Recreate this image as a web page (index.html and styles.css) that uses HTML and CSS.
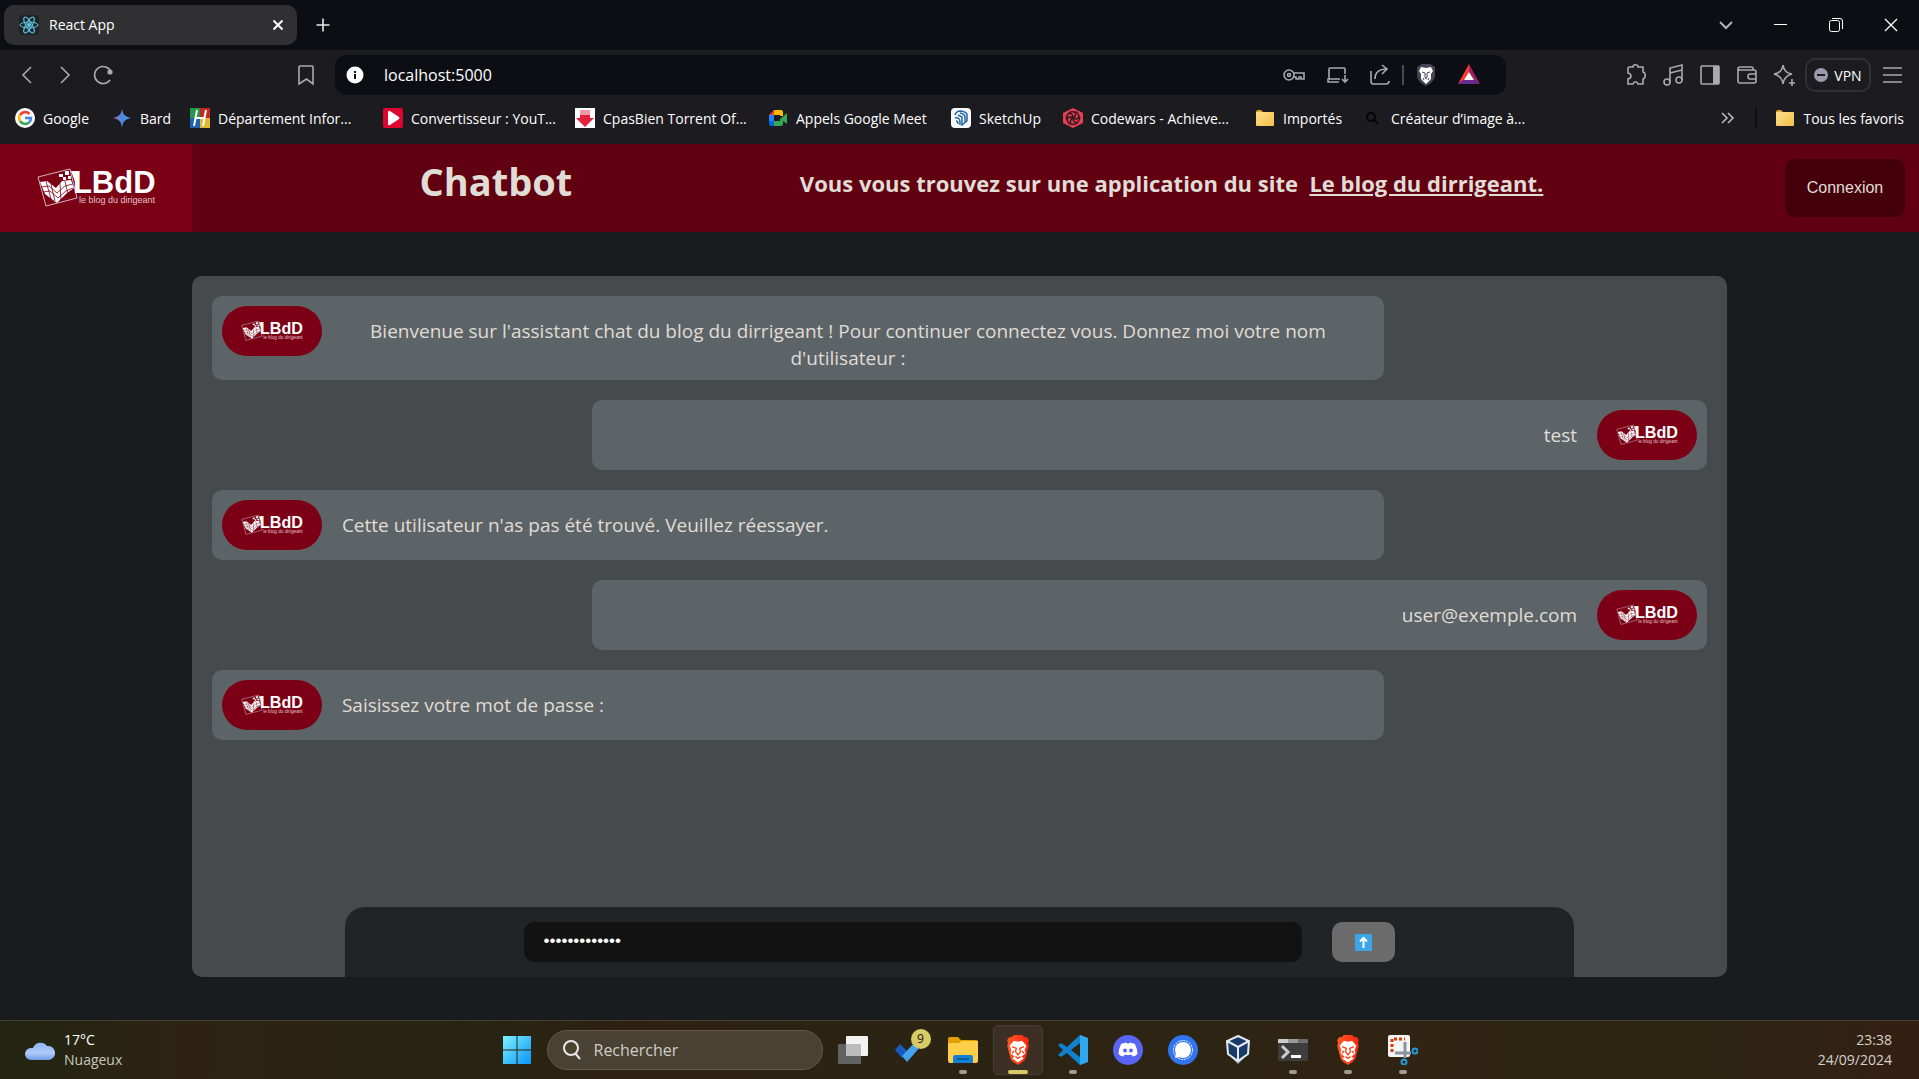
FILE: index.html
```html
<!DOCTYPE html>
<html lang="fr">
<head>
<meta charset="utf-8">
<meta name="viewport" content="width=device-width, initial-scale=1">
<title>React App</title>
<link rel="stylesheet" href="styles.css">
</head>
<body>
<svg class="logo-source" aria-hidden="true">
  <symbol id="logo" viewBox="0 0 192 88">
    <path d="M38 33 70 25 77 54 46 62Z" fill="none" stroke="#fff" stroke-width="1" stroke-opacity=".7"/>
    <path d="M40 38 47 37 56 44 62 37 71 36 74 44 66 50 57 59 45 50Z" fill="#fff"/>
    <path d="M41 43 49 42 57 49 65 42 73 40M43 48 50 47 58 54 66 47 73 44M46 37 51 55M51 40 55 57M60 39 61 56M65 37 68 50" fill="none" stroke="#7b0015" stroke-width=".8"/>
    <path d="M59 30h4v3h-4ZM65 27h4v4h-4ZM68 32h3v3h-3ZM63 33h3v3h-3Z" fill="#fff"/>
    <path d="M71 27h6v16Z" fill="#fff"/>
    <text x="73" y="49" class="logo-name">LBdD</text>
    <text x="79" y="59" class="logo-tag">le blog du dirigeant</text>
  </symbol>
</svg>
<svg class="sprite" aria-hidden="true">
  <defs>
    <linearGradient id="bard-fill" x1="0" x2="1"><stop offset="0" stop-color="#b06cc0"/><stop offset=".5" stop-color="#4a86d8"/><stop offset="1" stop-color="#3fa0e8"/></linearGradient>
    <linearGradient id="folder-fill" x1="0" x2="1" y2="1"><stop offset="0" stop-color="#ffe08a"/><stop offset="1" stop-color="#f3bf4a"/></linearGradient>
    <linearGradient id="brave-fill" x1="0" x2="1"><stop offset="0" stop-color="#ff5a1f"/><stop offset="1" stop-color="#ff2410"/></linearGradient>
    <linearGradient id="win-fill" x1="0" y1="0" x2="1" y2="1"><stop offset="0" stop-color="#7df3ff"/><stop offset="1" stop-color="#0a93f7"/></linearGradient>
    <linearGradient id="cloud-fill" x1="0" y1="0" x2="0" y2="1"><stop offset="0" stop-color="#8fb4f2"/><stop offset=".6" stop-color="#b0cbfa"/><stop offset="1" stop-color="#6f9be8"/></linearGradient>
  </defs>
  <symbol id="i-folder" viewBox="0 0 20 20"><path d="M1 4q0-2 2-2h3l3 3H1Z" fill="#e3a32c"/><rect x="1" y="4" width="18" height="14" rx="1" fill="url(#folder-fill)"/></symbol>
  <symbol id="i-brave" viewBox="0 0 32 36">
    <path d="M11 0h10l3 3 2-1 3 4-1 4 1 3-4 15q-1 3-3 4l-6 4-6-4q-2-1-3-4L3 13l1-3-1-4 3-4 2 1Z" fill="url(#brave-fill)"/>
    <path d="m11 7 5 1 5-1 5 6-2 5 1 4-5 4 3 2-7 5-7-5 3-2-5-4 1-4-2-5Z" fill="#fff"/>
    <path d="m9 14 5 2-1 4 3 4 3-4-1-4 5-2M13 26l3 2 3-2M11 19l-2 3M21 19l2 3" fill="none" stroke="#ff4017" stroke-width="1.600"/>
  </symbol>
</svg>

<header class="browser">
  <div class="tabstrip">
    <div class="tab">
      <svg class="i20" viewBox="0 0 20 20"><rect width="20" height="20" rx="3" fill="#212426"/><g fill="none" stroke="#61c9ea" stroke-width="1"><ellipse cx="10" cy="10" rx="9" ry="3"/><ellipse cx="10" cy="10" rx="9" ry="3" transform="rotate(60 10 10)"/><ellipse cx="10" cy="10" rx="9" ry="3" transform="rotate(120 10 10)"/></g><circle cx="10" cy="10" r="2" fill="#61c9ea"/></svg>
      <span class="tab-title">React App</span>
      <button class="plain" aria-label="Fermer l'onglet"><svg class="i20" viewBox="0 0 20 20"><path d="m5.500 5.500 9 9m0-9-9 9" stroke="#fff" stroke-width="2"/></svg></button>
    </div>
    <button class="plain new-tab" aria-label="Nouvel onglet"><svg class="i20" viewBox="0 0 20 20"><path d="M10 3.500v13M3.500 10h13" stroke="#e8e8ea" stroke-width="1.600"/></svg></button>
    <div class="window-controls">
      <button class="plain" aria-label="Onglets"><svg class="i20" viewBox="0 0 20 20"><path d="m4 7 6 6 6-6" fill="none" stroke="#b4b4b8" stroke-width="2"/></svg></button>
      <button class="plain" aria-label="Réduire"><svg class="i20" viewBox="0 0 20 20"><path d="M3 9.500h13" stroke="#fff"/></svg></button>
      <button class="plain" aria-label="Restaurer"><svg class="i20" viewBox="0 0 20 20"><g fill="none" stroke="#fff"><rect x="3.500" y="5.500" width="10" height="11" rx="2"/><path d="M6 3.500h8q2.500 0 2.500 2.500v8"/></g></svg></button>
      <button class="plain" aria-label="Fermer"><svg class="i20" viewBox="0 0 20 20"><path d="m4 4 12 12m0-12L4 16" stroke="#fff" stroke-width="1.300"/></svg></button>
    </div>
  </div>

  <div class="toolbar">
    <div class="nav-buttons">
      <button class="plain" aria-label="Précédent"><svg class="i24" viewBox="0 0 24 24"><path d="m16 4-8 8 8 8" class="line"/></svg></button>
      <button class="plain" aria-label="Suivant"><svg class="i24" viewBox="0 0 24 24"><path d="m8 4 8 8-8 8" class="line"/></svg></button>
      <button class="plain" aria-label="Actualiser"><svg class="i24" viewBox="0 0 24 24"><path d="M19 17a8.500 8.500 0 1 1 1-8" class="line"/><circle cx="19" cy="9" r="2.600" fill="#a9a9af"/></svg></button>
    </div>
    <button class="plain bookmark" aria-label="Ajouter aux favoris"><svg class="i24" viewBox="0 0 24 24"><path d="M6 3h12q1 0 1 1v17l-6.500-5L5 21V4q0-1 1-1Z" class="line"/></svg></button>
    <div class="address">
      <svg class="i20" viewBox="0 0 20 20"><circle cx="10" cy="10" r="8.500" fill="#fff"/><path d="M9 9h2v5H9Zm0-3h2v2H9Z" fill="#111"/></svg>
      <label class="hidden" for="url">Adresse</label>
      <div class="url-box"><input id="url" type="text" value="localhost:5000"></div>
      <button class="plain" aria-label="Mots de passe"><svg class="i24" viewBox="0 0 24 24"><circle cx="7" cy="12" r="5" class="line"/><circle cx="7" cy="12" r="1.500" class="line"/><path d="M12 10h10v6h-3v-2h-2v2h-3v-2h-3" class="line"/></svg></button>
      <button class="plain" aria-label="Installer"><svg class="i24" viewBox="0 0 24 24"><path d="M4 16V6q0-1 1-1h14q1 0 1 1v5M14 19H3v-3h12M20 12v7m-3-3 3 3 3-3" class="line"/></svg></button>
      <button class="plain" aria-label="Partager"><svg class="i24" viewBox="0 0 24 24"><path d="M3 8v10q0 3 2 3h13q3 0 3-3M7 16q0-10 12-10m-5-4 5 4-5 5" class="line"/></svg></button>
      <span class="divider"></span>
      <button class="plain" aria-label="Brave Shields"><svg class="i24" viewBox="0 0 24 24"><path d="M8 1 3 4v9q1 6 9 10 8-4 9-10V4l-5-3Z" fill="#454655"/><path d="m7 4 5 1 5-1 2 4-2 3v5l-5 5-5-5v-5L5 8Z" fill="#fff"/><path d="m8 9 3 1v4l1 2 1-2v-4l3-1M9 15l1 2m5-2-1 2" fill="none" stroke="#454655"/></svg></button>
      <button class="plain" aria-label="Brave Rewards"><svg class="i24" viewBox="0 0 24 24"><path d="M12 1 1 21l7-5 4-7Z" fill="#ff3b30"/><path d="m12 1 11 20-7-5-4-7Z" fill="#9e1f63"/><path d="m8 16-7 5h22l-7-5Z" fill="#662d91"/><path d="m12 9 5 8H7Z" fill="#fff"/></svg></button>
    </div>
    <div class="extensions">
      <button class="plain" aria-label="Extensions"><svg class="i24" viewBox="0 0 24 24"><path d="M5 4h4c-1-3 6-3 5 0h5v5c3 1 3 6 0 7v5h-5c-1-3-4-3-5 0H4v-5c4-1 4-5 0-6V5Z" class="line"/></svg></button>
      <button class="plain" aria-label="Musique"><svg class="i24" viewBox="0 0 24 24"><circle cx="6" cy="19" r="3" class="line"/><circle cx="18" cy="17" r="3" class="line"/><path d="M9 19V5l12-3v15M9 10l12-3" class="line"/></svg></button>
      <button class="plain" aria-label="Panneau latéral"><svg class="i24" viewBox="0 0 24 24"><rect x="3" y="3" width="18" height="18" rx="1" class="line"/><path d="M15 3h6v18h-6Z" fill="#a9a9af"/></svg></button>
      <button class="plain" aria-label="Portefeuille"><svg class="i24" viewBox="0 0 24 24"><path d="M18 7V5q0-1-2-1H5Q3 4 3 6v12q0 2 2 2h14q2 0 2-2V9q0-2-2-2H5q-2 0-2-2M21 11h-6q-2 0-2 2.500t2 2.500h6" class="line"/></svg></button>
      <button class="plain" aria-label="Leo"><svg class="i24" viewBox="0 0 24 24"><path d="M11 2q1 8 9 9-8 2-9 10-1-8-9-10 8-1 9-9ZM20 16v7m-3-3h6" class="line"/></svg></button>
      <button class="vpn"><svg class="i14" viewBox="0 0 14 14"><circle cx="7" cy="7" r="7" fill="#9a9aae"/><path d="M3 7h8" stroke="#1c1b1f" stroke-width="2"/></svg>VPN</button>
      <button class="plain" aria-label="Menu"><svg class="i24" viewBox="0 0 24 24"><path d="M3 5h19M3 12h19M3 19h19" class="line"/></svg></button>
    </div>
  </div>

  <nav class="bookmarks" aria-label="Favoris">
    <div class="bookmark-list">
      <a href="#"><svg class="i20" viewBox="0 0 20 20"><circle cx="10" cy="10" r="10" fill="#fff"/><g fill="none" stroke-width="2.600"><path d="M14.500 6A6 6 0 0 0 5 7" stroke="#ea4335"/><path d="M5 7a6 6 0 0 0 0 6" stroke="#fbbc05"/><path d="M5 13a6 6 0 0 0 9 1.500" stroke="#34a853"/><path d="M14 14.500q2-1.500 2-4.500h-6" stroke="#4285f4"/></g></svg>Google</a>
      <a href="#"><svg class="i20" viewBox="0 0 20 20"><path d="M10 1q1 8 9 9-8 1-9 9-1-8-9-9 8-1 9-9Z" fill="url(#bard-fill)"/></svg>Bard</a>
      <a href="#"><svg class="i20" viewBox="0 0 20 20"><path d="M0 0h10v10H0Z" fill="#27964a"/><path d="M10 0h10v10H10Z" fill="#c42a22"/><path d="M0 10h10v10H0Z" fill="#1e62b4"/><path d="M10 10h10v10H10Z" fill="#e2b92f"/><path d="M7 2 4 18M16 2l-3 16M6 10h9" stroke="#fff" stroke-width="2"/></svg>Département Infor...</a>
      <a href="#"><svg class="i20" viewBox="0 0 20 20"><rect width="20" height="20" rx="2" fill="#dc0630"/><path d="M5 4q0-2 2-1l9 6q1 1 0 2l-9 6q-2 1-2-1Z" fill="#fff"/></svg>Convertisseur : YouT...</a>
      <a href="#"><svg class="i20" viewBox="0 0 20 20"><path d="M0 0h20v20H0Z" fill="#fff"/><path d="M5 2h10v8h4l-9 9-9-9h4Z" fill="#e0203c"/><path d="M5 2h10v5H5Z" fill="#f498a6"/></svg>CpasBien Torrent Of...</a>
      <a href="#"><svg class="i20" viewBox="0 0 20 20"><path d="M1 7h5v7H1Z" fill="#2684fc"/><path d="m1 7 5-5v5Z" fill="#ea4335"/><path d="M6 2h7q2 0 2 2v4h-3V7H6Z" fill="#ffba00"/><path d="M1 13h5v5H3q-2 0-2-2Z" fill="#0066da"/><path d="M6 13h6v-2l7-6v11l-4-3v3q0 2-2 2H6Z" fill="#34a853"/></svg>Appels Google Meet</a>
      <a href="#"><svg class="i20" viewBox="0 0 20 20"><rect width="20" height="20" rx="4" fill="#f7f9fb"/><path d="M4 7q1-4 6-4 6 1 6 4v6l-5 4V9L7 7M4 10q5-1 5 4v3M5 13q2 0 2 3M9 5q5 1 5 4v5" fill="none" stroke="#2465a8" stroke-width="1.500"/></svg>SketchUp</a>
      <a href="#"><svg class="i20" viewBox="0 0 20 20"><path d="m10 0 10 5v10l-10 5-10-5V5Z" fill="#e93d50"/><g fill="none" stroke="#321a22" stroke-width="1.500"><path id="cw" d="M10 10q4-2 2-6-5-1-6 1"/><use href="#cw" transform="rotate(60 10 10)"/><use href="#cw" transform="rotate(120 10 10)"/><use href="#cw" transform="rotate(180 10 10)"/><use href="#cw" transform="rotate(240 10 10)"/><use href="#cw" transform="rotate(300 10 10)"/></g></svg>Codewars - Achieve...</a>
      <a href="#"><svg class="i20"><use href="#i-folder"/></svg>Importés</a>
      <a href="#"><svg class="i20" viewBox="0 0 20 20"><circle cx="8" cy="9" r="4" fill="none" stroke="#050505" stroke-width="2"/><path d="m11 12 4 4" stroke="#050505" stroke-width="2"/></svg>Créateur d’image à...</a>
    </div>
    <button class="plain" aria-label="Autres favoris"><svg class="i20" viewBox="0 0 20 20"><path d="m5 5 5 5-5 5m6-10 5 5-5 5" fill="none" stroke="#b8b8bd" stroke-width="1.600"/></svg></button>
    <span class="divider dark"></span>
    <a href="#"><svg class="i20"><use href="#i-folder"/></svg>Tous les favoris</a>
  </nav>
</header>

<div class="app">
  <header class="site-header">
    <a class="site-logo" href="#" aria-label="LBdD, le blog du dirigeant"><svg><use href="#logo"/></svg></a>
    <h1>Chatbot</h1>
    <h2>Vous vous trouvez sur une application du site&nbsp; <a href="#">Le blog du dirrigeant.</a></h2>
    <button class="login">Connexion</button>
  </header>

  <main class="chat">
    <div class="messages">
      <div class="message bot"><svg class="avatar"><use href="#logo"/></svg><p>Bienvenue sur l'assistant chat du blog du dirrigeant ! Pour continuer connectez vous. Donnez moi votre nom d'utilisateur :</p></div>
      <div class="message user"><p>test</p><svg class="avatar"><use href="#logo"/></svg></div>
      <div class="message bot"><svg class="avatar"><use href="#logo"/></svg><p>Cette utilisateur n'as pas été trouvé. Veuillez réessayer.</p></div>
      <div class="message user"><p>user@exemple.com</p><svg class="avatar"><use href="#logo"/></svg></div>
      <div class="message bot"><svg class="avatar"><use href="#logo"/></svg><p>Saisissez votre mot de passe :</p></div>
    </div>
    <form class="composer">
      <label class="hidden" for="answer">Mot de passe</label>
      <input id="answer" type="password" value="motdepasse123">
      <button type="button" aria-label="Envoyer"><svg viewBox="0 0 17 17"><rect width="17" height="17" rx="1" fill="#3ba5ea"/><path d="M8.500 14V4M5 7.500 8.500 4 12 7.500" fill="none" stroke="#fff" stroke-width="2"/></svg></button>
    </form>
  </main>
</div>

<footer class="taskbar">
  <div class="weather">
    <svg viewBox="0 0 30 20"><path d="M6 20a6 6 0 0 1 0-12q2 0 2 0a8 8 0 0 1 14-2 7 7 0 0 1 2 14Z" fill="url(#cloud-fill)"/></svg>
    <div><div class="temp">17°C</div><div>Nuageux</div></div>
  </div>
  <div class="dock">
    <button class="slot" aria-label="Démarrer"><svg viewBox="0 0 30 30"><path d="M1 1h13.500v13.500H1Zm14.500 0H29v13.500H15.500ZM1 15.500h13.500V29H1Zm14.500 0H29V29H15.500Z" fill="url(#win-fill)"/></svg></button>
    <label class="search"><svg class="i20" viewBox="0 0 20 20"><circle cx="9" cy="8" r="7" fill="none" stroke="#e8e8e8" stroke-width="2"/><path d="m13 13 5 6" stroke="#e8e8e8" stroke-width="2"/></svg><input type="text" placeholder="Rechercher" aria-label="Rechercher"></label>
    <button class="slot" aria-label="Vue des tâches"><svg viewBox="0 0 30 30"><rect x="0" y="9" width="23" height="20" rx="1" fill="#626262"/><rect x="8" y="1" width="22" height="20" rx="1" fill="#f3f3f3"/><path d="M8 9h15v12H8Z" fill="#bcbcbc"/></svg></button>
    <button class="slot" aria-label="To Do"><svg viewBox="0 0 30 30"><path d="m2 15 5-6 7 7-5 7Z" fill="#185abd"/><path d="m9 21 14-15 5 5-14 16Z" fill="#43a3f0"/></svg><span class="badge">9</span></button>
    <button class="slot open" aria-label="Explorateur"><svg viewBox="0 0 30 30"><path d="M0 4q0-2 2-2h8l3 3h15q2 0 2 2v6H0Z" fill="#e0a100"/><path d="M0 8h11l3-2h16v20q0 2-2 2H2q-2 0-2-2Z" fill="#ffcf48"/><path d="M5 28v-6q0-2 2-2h16q2 0 2 2v6Z" fill="#1382d4"/><path d="M9 24h12" stroke="#0a5ca0" stroke-width="2"/></svg></button>
    <button class="slot active" aria-label="Brave"><svg viewBox="0 0 32 36"><use href="#i-brave"/></svg></button>
    <button class="slot open" aria-label="Visual Studio Code"><svg viewBox="0 0 30 30"><path d="M22 0 9 12 3 8 0 10l5 5-5 5 3 2 6-4 13 12 7-3V3Zm0 8v14l-9-7Z" fill="#0f82cf"/><path d="m22 0 8 3v24l-8 3Z" fill="#2fa8f2"/></svg></button>
    <button class="slot" aria-label="Discord"><svg viewBox="0 0 30 30"><circle cx="15" cy="15" r="15" fill="#5865f2"/><path d="M8 9q2-1 5-1.500l1 1h2l1-1q3 .5 5 1.500 2 4 2.500 10-2 2-5 2.500l-1-2q-3.500 1-7 0l-1 2q-3-.5-5-2.500Q6 13 8 9Z" fill="#fff"/><circle cx="12" cy="15.500" r="2" fill="#5865f2"/><circle cx="18" cy="15.500" r="2" fill="#5865f2"/></svg></button>
    <button class="slot" aria-label="Signal"><svg viewBox="0 0 30 30"><circle cx="15" cy="15" r="15" fill="#3273f0"/><circle cx="15" cy="15" r="9.500" fill="none" stroke="#fff" stroke-dasharray="2 1"/><circle cx="15" cy="15" r="8" fill="#fff"/><path d="m8 18-1 5 5-1Z" fill="#fff"/></svg></button>
    <button class="slot" aria-label="VirtualBox"><svg viewBox="0 0 30 30"><path d="m9 23 6 6 6-6v-4H9Z" fill="#9fb0cc"/><path d="m15 1 11 5-1 13-10 7-10-7L4 6Z" fill="#193a68" stroke="#e4eaf2" stroke-width="2"/><path d="m4 6 11 6 11-6M15 12v14" fill="none" stroke="#e4eaf2" stroke-width="2"/></svg></button>
    <button class="slot open" aria-label="Terminal"><svg viewBox="0 0 30 30"><rect y="4" width="30" height="22" rx="1" fill="#3e3e3e"/><path d="M0 8V5q0-1 1-1h9v4Z" fill="#ccc"/><path d="M10 4h10v4H10Z" fill="#9a9a9a"/><path d="M20 4h9l1 1v3H20Z" fill="#6e6e6e"/><path d="m4 11 6 6-6 6" fill="none" stroke="#ccc" stroke-width="3"/><path d="M13 20h10v3H13Z" fill="#fff"/></svg></button>
    <button class="slot open" aria-label="Brave"><svg viewBox="0 0 32 36"><use href="#i-brave"/></svg></button>
    <button class="slot open" aria-label="Outil Capture"><svg viewBox="0 0 30 30"><rect width="22" height="22" rx="2" fill="#f4f4f4"/><path d="M4 17V4h13" fill="none" stroke="#d83b01" stroke-width="3" stroke-dasharray="3 2"/><path d="M7 18h16M17 7v16" stroke="#8a939c" stroke-width="3"/><circle cx="27" cy="16" r="2.500" fill="none" stroke="#1f9ae0" stroke-width="2"/><circle cx="16" cy="27" r="2.500" fill="none" stroke="#1f9ae0" stroke-width="2"/></svg></button>
  </div>
  <div class="clock"><time>23:38</time><time datetime="2024-09-24">24/09/2024</time></div>
</footer>
</body>
</html>
```
FILE: styles.css
```css
* { box-sizing: border-box; }

body {
  margin: 0;
  min-height: 100vh;
  display: flex;
  flex-direction: column;
  background: #1a1b1c;
  color: #fff;
  font-family: "Open Sans", "Noto Sans", sans-serif;
  font-size: 14px;
}

button, input { font: inherit; color: inherit; }
button { border: 0; padding: 0; }
a { color: inherit; }
svg { display: block; flex: none; }

.logo-source { display: none; }
.sprite { position: absolute; width: 0; height: 0; }
.hidden { position: absolute; width: 1px; height: 1px; overflow: hidden; clip-path: inset(50%); }
.i14 { width: 14px; height: 14px; }
.i20 { width: 20px; height: 20px; }
.i24 { width: 24px; height: 24px; }
.line { fill: none; stroke: #a9a9af; stroke-width: 1.6; }
.plain { background: none; display: flex; align-items: center; justify-content: center; }

/* Browser window */
.browser { background: #1c1b1f; }
.tabstrip { height: 50px; display: flex; align-items: center; padding: 0 4px; background: #0d0e13; }
.tab {
  width: 293px; height: 40px; padding: 0 9px 0 15px;
  display: flex; align-items: center; gap: 10px;
  border-radius: 10px; background: #303033;
}
.tab-title { flex: 1; padding-bottom: 2px; }
.new-tab { margin-left: 16px; }
.window-controls { margin-left: auto; display: flex; gap: 35px; padding-right: 14px; }

.toolbar { height: 50px; display: flex; align-items: center; padding: 0 15px; }
.nav-buttons { display: flex; gap: 14px; }
.bookmark { margin-left: 179px; margin-right: 17px; }
.address {
  flex: 1; height: 40px; padding: 0 25px 0 10px;
  display: flex; align-items: center; gap: 19px;
  border-radius: 12px; background: #0d0e13;
}
.url-box { flex: 1; }
.url-box input { width: 100%; padding: 0; border: 0; outline: 0; background: none; font-size: 16px; }
.divider { width: 2px; height: 20px; background: #4a4a50; }
.divider.dark { background: #0d0e13; }
.address .divider { margin: 0 -9px; }
.extensions { margin-left: 118px; display: flex; align-items: center; gap: 13px; }
.vpn {
  width: 66px; height: 34px; margin: 0 -4px;
  display: flex; align-items: center; justify-content: center; gap: 6px;
  border: 2px solid #303035; border-radius: 10px; background: none;
}

.bookmarks { height: 44px; display: flex; align-items: center; padding: 0 15px 8px; gap: 18px; }
.bookmark-list {
  flex: 1; display: grid;
  grid-template-columns: 97px 78px 193px 192px 193px 183px 112px 192px 108px auto;
}
.bookmarks a { display: flex; align-items: center; gap: 8px; text-decoration: none; white-space: nowrap; }

/* Site header */
.app { flex: 1; display: flex; flex-direction: column; color: #e0dcd6; }
.site-header {
  height: 88px; display: flex; align-items: center; justify-content: space-between;
  background: #610010;
}
.site-logo { width: 10%; height: 100%; background: #7b0015; }
.site-logo svg { width: 100%; height: 100%; }
.logo-name { font: bold 31px "Liberation Sans", sans-serif; fill: #fff; }
.logo-tag { font: 9px "Liberation Sans", sans-serif; fill: #e3c4c8; }
.site-header h1, .site-header h2 { margin: 0; line-height: 40px; }
.site-header h1 { padding-bottom: 14px; font-size: 38px; }
.site-header h2 { padding-bottom: 10px; font-size: 22px; }
.login {
  width: 120px; height: 58px; margin: 0 14px;
  border-radius: 10px; background: #43000b;
  font: 16px "Liberation Sans", sans-serif;
}

/* Chat */
.chat {
  flex: 1; width: 80%; margin: 44px auto 43px; padding-top: 20px;
  display: flex; flex-direction: column; justify-content: space-between; align-items: center;
  border-radius: 10px; background: #464a4c;
}
.messages { width: 100%; padding: 0 20px; display: flex; flex-direction: column; gap: 20px; }
.message {
  min-height: 70px; padding: 10px 10px 8px;
  display: flex; align-items: flex-start;
  border-radius: 10px; background: #5d6467;
}
.message.bot { margin-right: 323px; }
.message.user { margin-left: 380px; justify-content: flex-end; }
.message p { margin: 0 20px; padding-top: 12px; font-size: 19px; line-height: 27px; text-align: center; }
.avatar { width: 100px; height: 50px; border-radius: 25px; background: #7b0015; }

.composer {
  width: 80%; padding: 15px;
  display: flex; justify-content: center; gap: 30px;
  border-radius: 20px 20px 0 0; background: #202426;
}
.composer input {
  width: 65%; height: 40px; padding: 0 20px 2px;
  border: 0; outline: 0; border-radius: 10px; background: #121212; color: #fff;
  font: 17px "Liberation Sans", sans-serif;
}
.composer button {
  width: 63px; height: 40px; border-radius: 10px; background: #6b6b6b;
  display: flex; align-items: center; justify-content: center;
}
.composer button svg { width: 17px; height: 17px; }

/* Taskbar */
.taskbar {
  height: 59px; display: grid; grid-template-columns: 1fr auto 1fr; align-items: center;
  border-top: 1px solid #454034;
  background: linear-gradient(90deg, #222511 0, #2e2313 10%, #272512 24%, #2e2112 33%, #2b2413 48%, #302413 75%, #2d2612 84%, #2f2413 92%, #341f12 100%);
}
.weather { display: flex; align-items: center; gap: 9px; padding-left: 25px; line-height: 20px; color: #c9c6be; }
.weather svg { width: 30px; height: 20px; }
.weather .temp { color: #fff; }
.dock { display: flex; align-items: center; gap: 5px; }
.slot {
  position: relative; width: 50px; height: 50px; border-radius: 5px; background: none;
  display: flex; align-items: center; justify-content: center;
}
.slot svg { width: 30px; height: 30px; }
.slot.active { background: #3b3023; border: 1px solid #463c2f; }
.slot.open::after, .slot.active::after {
  content: ""; position: absolute; bottom: 1px; width: 8px; height: 4px;
  border-radius: 2px; background: #a09a90;
}
.slot.active::after { bottom: 0; width: 20px; background: #d8ca66; }
.badge {
  position: absolute; top: 4px; right: 2px; width: 20px; height: 20px;
  border-radius: 10px; background: #d8ca66; color: #111; font-size: 12px; line-height: 20px;
}
.search {
  width: 276px; height: 40px; padding: 0 14px; display: flex; align-items: center; gap: 12px;
  border: 1px solid #625b4a; border-radius: 20px; background: #494233;
}
.search input { width: 100%; padding: 0; border: 0; outline: 0; background: none; font-size: 16px; }
.search input::placeholder { color: #d0cdc6; opacity: 1; }
.clock { padding-right: 27px; text-align: right; line-height: 20px; color: #d5d2cb; }
.clock time { display: block; }
```
